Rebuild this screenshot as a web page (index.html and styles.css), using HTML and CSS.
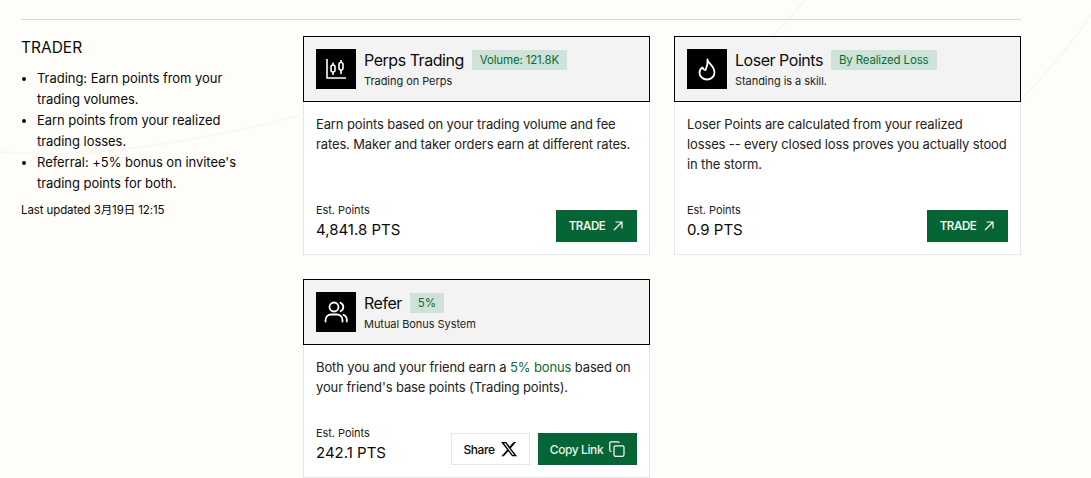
FILE: index.html
```html
<!DOCTYPE html>
<html lang="en">
<head>
<meta charset="utf-8">
<title>Trader Points</title>
<link rel="stylesheet" href="styles.css">
</head>
<body>
<svg class="bg-lines" width="1091" height="478" viewBox="0 0 1091 478" fill="none" aria-hidden="true">
  <path d="M0 152 C90 160 210 140 300 115" stroke="#f8f7f2" stroke-width="2"/>
  <path d="M805 0 C780 30 760 50 730 80" stroke="#f8f7f2" stroke-width="2"/>
  <path d="M1091 15 C1060 60 1030 90 1021 100" stroke="#f8f7f2" stroke-width="2"/>
</svg>
<main class="page">
  <div class="layout">
    <aside class="side">
      <h2 class="side-title">TRADER</h2>
      <ul class="side-list">
        <li>Trading: Earn points from your trading volumes.</li>
        <li>Earn points from your realized trading losses.</li>
        <li>Referral: +5% bonus on invitee's trading points for both.</li>
      </ul>
      <p class="updated">Last updated 3月19日 12:15</p>
    </aside>
    <section class="cards">
      <article class="card card-tall">
        <header class="card-head">
          <span class="icon-box">
            <svg width="24" height="24" viewBox="0 0 24 24" fill="none" stroke="#fff" stroke-width="1.600"><path d="M3 2V21H22"/><path d="M9 5.500V18M17 3V17"/><rect x="7" y="8" width="4" height="7" rx="2" fill="#000"/><rect x="15" y="5.500" width="4" height="7.500" rx="2" fill="#000"/></svg>
          </span>
          <div class="head-text">
            <div class="title-row"><h3 class="card-title">Perps Trading</h3><span class="tag">Volume: 121.8K</span></div>
            <p class="card-sub">Trading on Perps</p>
          </div>
        </header>
        <div class="card-body">
          <p class="desc">Earn points based on your trading volume and fee rates. Maker and taker orders earn at different rates.</p>
          <div class="card-foot">
            <div class="points"><span class="points-label">Est. Points</span><span class="points-value">4,841.8 PTS</span></div>
            <a class="btn btn-primary btn-trade">TRADE
              <svg width="12" height="12" viewBox="0 0 12 12" fill="none" stroke="#fff" stroke-width="1.200"><path d="M2 10 10 2M3.500 2H10V8.500"/></svg>
            </a>
          </div>
        </div>
      </article>
      <article class="card card-tall">
        <header class="card-head">
          <span class="icon-box">
            <svg width="24" height="24" viewBox="0 0 24 24" fill="none" stroke="#fff" stroke-width="1.800" stroke-linejoin="round"><path d="M12.500 2.500C13 6.500 19.500 9 19.500 15.500C19.500 19.500 16 22.500 12 22.500C8 22.500 4.500 19.500 4.500 15.800C4.500 13.500 5.700 11.500 7.500 10.500C8 12 9 13 10.500 13.200C12 10 13 6.500 12.500 2.500Z"/></svg>
          </span>
          <div class="head-text">
            <div class="title-row"><h3 class="card-title">Loser Points</h3><span class="tag">By Realized Loss</span></div>
            <p class="card-sub">Standing is a skill.</p>
          </div>
        </header>
        <div class="card-body">
          <p class="desc">Loser Points are calculated from your realized<br>losses -- every closed loss proves you actually stood in the storm.</p>
          <div class="card-foot">
            <div class="points"><span class="points-label">Est. Points</span><span class="points-value">0.9 PTS</span></div>
            <a class="btn btn-primary btn-trade">TRADE
              <svg width="12" height="12" viewBox="0 0 12 12" fill="none" stroke="#fff" stroke-width="1.200"><path d="M2 10 10 2M3.500 2H10V8.500"/></svg>
            </a>
          </div>
        </div>
      </article>
      <article class="card card-short">
        <header class="card-head">
          <span class="icon-box">
            <svg width="24" height="24" viewBox="0 0 24 24" fill="none" stroke="#fff" stroke-width="1.800" stroke-linecap="round"><circle cx="10" cy="7" r="4.500"/><path d="M1.500 21.500V20C1.500 16.500 4.500 14.500 7 14.500H13C15.500 14.500 18.500 16.500 18.500 20V21.500"/><path d="M16.500 2.800C18.300 3.500 19.300 5.200 19.300 7C19.300 8.800 18.300 10.500 16.500 11.200"/><path d="M19.500 14.800C21.500 15.500 22.800 17.500 22.800 20V21.500"/></svg>
          </span>
          <div class="head-text">
            <div class="title-row"><h3 class="card-title">Refer</h3><span class="tag">5%</span></div>
            <p class="card-sub">Mutual Bonus System</p>
          </div>
        </header>
        <div class="card-body">
          <p class="desc">Both you and your friend earn a <span class="accent">5% bonus</span> based on your friend's base points (Trading points).</p>
          <div class="card-foot">
            <div class="points"><span class="points-label">Est. Points</span><span class="points-value">242.1 PTS</span></div>
            <div class="actions">
              <a class="btn btn-outline">Share
                <svg width="17" height="16" viewBox="0 0 24 24" fill="#000"><path d="M18.240 1.500h3.680l-8.040 9.190L23.340 23h-7.410l-5.800-7.590L3.480 23H-.2l8.600-9.830L-.68 1.500h7.600l5.240 6.930zm-1.290 19.330h2.040L5.830 3.560H3.640z"/></svg>
              </a>
              <a class="btn btn-primary btn-copy">Copy Link
                <svg width="16" height="16" viewBox="0 0 16 16" fill="none" stroke="#fff" stroke-width="1.200"><rect x="5" y="4.800" width="10" height="10.500" rx="1.500"/><path d="M2.500 10.500H2A1.200 1.200 0 0 1 .8 9.300V2A1.200 1.200 0 0 1 2 .8H9A1.200 1.200 0 0 1 10.200 2"/></svg>
              </a>
            </div>
          </div>
        </div>
      </article>
    </section>
  </div>
</main>
</body>
</html>
```
FILE: styles.css
```css
* { box-sizing: border-box; }
html, body { margin: 0; padding: 0; }
body {
  width: 1091px;
  height: 478px;
  overflow: hidden;
  position: relative;
  background: #fefdf9;
  color: #0b0b0b;
  font-family: "Inter", "Noto Sans CJK SC", sans-serif;
}
.bg-lines { position: absolute; left: 0; top: 0; }
.page { position: relative; padding: 19px 70px 0 21px; }
.layout {
  display: flex;
  border-top: 1px solid #d9d9d7;
  padding-top: 16px;
}
.side { width: 282px; flex: none; padding-top: 2px; }
.side-title { margin: 0; font-size: 15.500px; line-height: 20px; font-weight: 400; }
.side-list {
  margin: 10px 0 0;
  padding: 0 0 0 16px;
  width: 225px;
  font-size: 13px;
  line-height: 21px;
  letter-spacing: -0.04px;
}
.updated { margin: 8px 0 0; font-size: 11.500px; line-height: 16px; letter-spacing: -0.1px; }
.cards {
  display: grid;
  grid-template-columns: 347px 347px;
  column-gap: 24px;
  row-gap: 24px;
  align-content: start;
  width: 718px;
}
.card {
  display: flex;
  flex-direction: column;
  background: #fff;
  box-shadow: inset 0 0 0 1px #e5e5e3;
}
.card-tall { height: 219px; }
.card-short { height: 199px; }
.card-head {
  display: flex;
  align-items: center;
  gap: 8px;
  height: 66px;
  padding: 0 12px;
  flex: none;
  background: #f3f3f3;
  border: 1px solid #000;
}
.icon-box {
  display: flex;
  align-items: center;
  justify-content: center;
  width: 40px;
  height: 40px;
  flex: none;
  background: #000;
}
.title-row { display: flex; align-items: center; gap: 8px; }
.card-title { margin: 0; font-size: 16px; line-height: 20px; font-weight: 400; letter-spacing: -0.47px; }
.tag {
  padding: 0 8px;
  font-size: 11.500px;
  line-height: 20px;
  background: #cfe2d7;
  color: #0b6b3a;
  letter-spacing: -0.15px;
}
.card-sub { margin: 4px 0 0; font-size: 11px; line-height: 15px; color: #222; letter-spacing: -0.05px; }
.card-body {
  flex: 1;
  display: flex;
  flex-direction: column;
  justify-content: space-between;
  padding: 12px 13px 13px;
}
.desc { margin: 0 -3px 0 0; font-size: 13px; line-height: 20px; color: #222; letter-spacing: -0.13px; }
.accent { color: #0b6b3a; }
.card-foot { display: flex; align-items: flex-end; justify-content: space-between; }
.points { display: flex; flex-direction: column; padding-bottom: 2px; }
.points-label { font-size: 11px; line-height: 15px; color: #222; letter-spacing: -0.05px; }
.points-value { margin-top: 2px; font-size: 15px; line-height: 20px; color: #0b0b0b; }
.actions { display: flex; gap: 8px; }
.btn {
  display: flex;
  align-items: center;
  justify-content: center;
  gap: 6px;
  height: 32px;
  padding: 0 12px;
  font-size: 12px;
  font-weight: 500;
  letter-spacing: -0.4px;
}
.btn-primary { background: #066535; color: #e6f5ea; }
.btn-trade { width: 81px; gap: 7px; font-weight: 600; font-size: 11.500px; }
.btn-copy { width: 99px; padding: 0; }
.btn-outline { width: 79px; padding: 0; background: #fff; color: #0b0b0b; border: 1px solid #e5e5e3; }
```
